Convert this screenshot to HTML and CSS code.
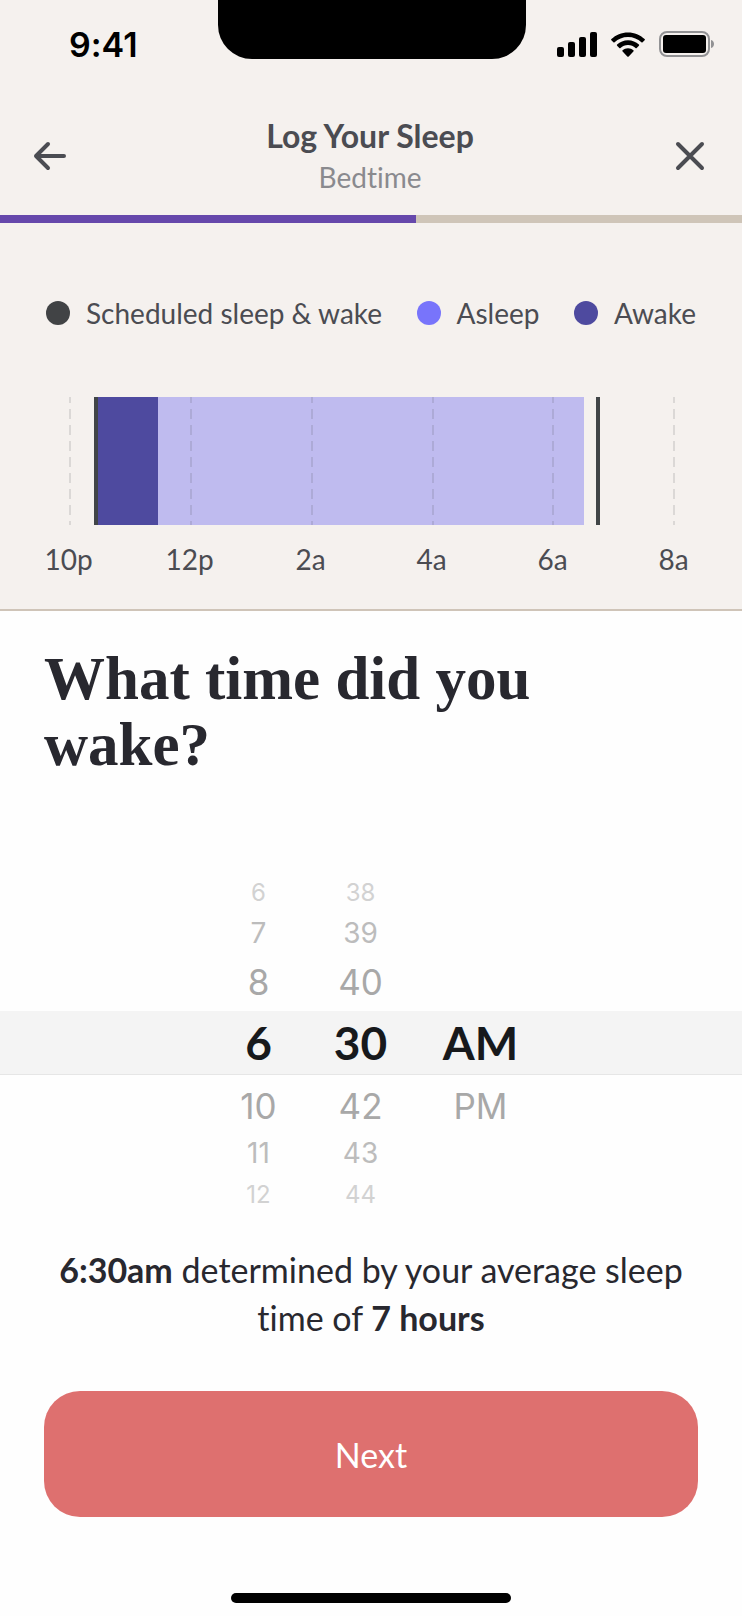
FILE: index.html
```html
<!DOCTYPE html>
<html lang="en">
<head>
    <meta charset="UTF-8">
    <meta name="viewport" content="width=device-width, initial-scale=1.0">
    <title>Log Your Sleep</title>
    <link rel="stylesheet" href="styles.css">
</head>
<body>
    <div class="screen">
        <div class="top">
            <!-- Status bar -->
            <div class="status-bar">
                <div class="clock">9:41</div>
                <div class="notch"></div>
                <div class="status-icons">
                    <svg width="40" height="26" viewBox="0 -1 40 26">
                        <rect x="0" y="15" width="7" height="10" rx="2"/>
                        <rect x="11" y="10" width="7" height="15" rx="2"/>
                        <rect x="22" y="5" width="7" height="20" rx="2"/>
                        <rect x="33" y="0" width="7" height="25" rx="2"/>
                    </svg>
                    <svg width="34" height="26" viewBox="0 -1 34 26">
                        <path d="M17 0.5C10.6 0.5 4.7 3 0.4 7.1q-.6.6 0 1.2L2.4 10.2q.6.5 1.2 0C7.1 6.9 11.8 4.9 17 4.9s9.9 2 13.4 5.3q.6.5 1.2 0l2-1.9q.6-.6 0-1.2C29.3 3 23.4.5 17 .5z"/>
                        <path d="M17 8.3c-4.2 0-8 1.6-10.9 4.3q-.6.6 0 1.2l2.2 2.2q.6.5 1.2 0c2-1.9 4.6-3 7.5-3s5.500 1.1 7.5 3q.6.5 1.2 0l2.2-2.2q.6-.6 0-1.2C25 9.9 21.2 8.3 17 8.3z"/>
                        <path d="M17 16.2c-2.1 0-4 .8-5.4 2q-.6.6 0 1.2l4.700 5q.7.7 1.4 0l4.700-5q.6-.6 0-1.2c-1.4-1.2-3.3-2-5.400-2z"/>
                    </svg>
                    <svg width="56" height="26" viewBox="0 0 56 26">
                        <rect x="1" y="1" width="49" height="24" rx="7" fill="none" stroke="#929294" stroke-width="2"/>
                        <rect x="4" y="4" width="43" height="18" rx="3"/>
                        <path d="M52 9c4 1 4 7 0 8z" fill="#929294"/>
                    </svg>
                </div>
            </div>
            <!-- Title with back and close -->
            <header class="header">
                <button class="icon-btn" aria-label="Back">
                    <svg width="36" height="36" viewBox="0 0 36 36">
                        <path d="M16 6L4 18L16 30M4 18H32"/>
                    </svg>
                </button>
                <div class="header-text">
                    <h1 class="title">Log Your Sleep</h1>
                    <div class="subtitle">Bedtime</div>
                </div>
                <button class="icon-btn" aria-label="Close">
                    <svg width="36" height="36" viewBox="0 0 36 36">
                        <path d="M6 6L30 30M30 6L6 30"/>
                    </svg>
                </button>
            </header>
            <div class="progress"><div class="progress-fill" style="width: 56%"></div></div>
            <!-- Sleep chart -->
            <ul class="legend">
                <li class="legend-item"><span class="dot dot-scheduled"></span>Scheduled sleep &amp; wake</li>
                <li class="legend-item"><span class="dot dot-asleep"></span>Asleep</li>
                <li class="legend-item"><span class="dot dot-awake"></span>Awake</li>
            </ul>
            <svg class="chart" viewBox="0 0 742 128">
                <rect class="bar-asleep" x="158" y="0" width="426" height="128"/>
                <path class="grid-lines" d="M70 0V128M191 0V128M312 0V128M433 0V128M553 0V128M674 0V128"/>
                <rect class="bar-awake" x="98" y="0" width="60" height="128"/>
                <rect class="bar-scheduled" x="94" y="0" width="4" height="128"/>
                <rect class="bar-scheduled" x="596" y="0" width="4" height="128"/>
            </svg>
            <div class="hours">
                <span>10p</span>
                <span>12p</span>
                <span>2a</span>
                <span>4a</span>
                <span>6a</span>
                <span>8a</span>
            </div>
        </div>

        <main class="content">
            <h2 class="question">What time did you wake?</h2>
            <!-- Time picker -->
            <div class="picker" role="group" aria-label="Wake time">
                <div class="picker-row far"><button>6</button><button>38</button></div>
                <div class="picker-row mid"><button>7</button><button>39</button></div>
                <div class="picker-row near"><button>8</button><button>40</button></div>
                <div class="picker-row selected"><button>6</button><button>30</button><button>AM</button></div>
                <div class="picker-row near"><button>10</button><button>42</button><button>PM</button></div>
                <div class="picker-row mid"><button>11</button><button>43</button></div>
                <div class="picker-row far"><button>12</button><button>44</button></div>
            </div>
            <p class="note"><b>6:30am</b> determined by your average sleep time of <b>7 hours</b></p>
            <button class="next-btn">Next</button>
        </main>
        <div class="home-bar"></div>
    </div>
</body>
</html>
```
FILE: styles.css
```css
* {
    box-sizing: border-box;
}
body {
    margin: 0;
    font-family: Lato, sans-serif;
    font-variant-ligatures: none;
    background: #fefefe;
    color: #28282f;
}
button {
    font-family: inherit;
    background: none;
    border: none;
    padding: 0;
    cursor: pointer;
}
.screen {
    display: flex;
    flex-direction: column;
    min-height: 100vh;
}
.top {
    background: #f5f1ee;
    border-bottom: 2px solid #cfc4b8;
    color: #4b4c52;
}
/* Status bar */
.status-bar {
    display: flex;
    justify-content: space-between;
    align-items: flex-start;
    height: 108px;
}
.clock {
    width: 218px;
    padding: 24px 0 0 69px;
    font-family: Inter, sans-serif;
    font-size: 34px;
    font-weight: 600;
    line-height: 42px;
    color: #000;
}
.notch {
    width: 308px;
    height: 59px;
    background: #000;
    border-radius: 0 0 34px 34px;
}
.status-icons {
    display: flex;
    justify-content: flex-end;
    gap: 14px;
    width: 216px;
    padding: 31px 27px 0 0;
}
/* Header */
.header {
    display: flex;
    justify-content: space-between;
    align-items: center;
    height: 107px;
    padding: 0 34px 11px 32px;
}
.header-text {
    text-align: center;
}
.icon-btn {
    display: flex;
}
.icon-btn svg {
    fill: none;
    stroke: #4b4c52;
    stroke-width: 4;
    stroke-linecap: round;
    stroke-linejoin: round;
}
.title {
    margin: 0;
    font-size: 32px;
    font-weight: 700;
    line-height: 42px;
}
.subtitle {
    font-size: 28px;
    line-height: 40px;
    color: #8a8a8e;
}
.progress {
    height: 8px;
    background: #cfc5b8;
}
.progress-fill {
    height: 100%;
    background: #6648ab;
}
/* Chart */
.legend {
    display: flex;
    justify-content: space-between;
    list-style: none;
    margin: 0;
    padding: 70px 46px 64px;
    font-size: 28px;
    line-height: 40px;
}
.legend-item {
    display: flex;
    align-items: center;
    gap: 16px;
}
.dot {
    width: 24px;
    height: 24px;
    border-radius: 50%;
}
.dot-scheduled {
    background: #414345;
}
.dot-asleep {
    background: #7874fb;
}
.dot-awake {
    background: #4e4a9f;
}
.chart {
    display: block;
    width: 100%;
}
.bar-asleep {
    fill: #bfbbef;
}
.bar-awake {
    fill: #4e4a9f;
}
.bar-scheduled {
    fill: #414547;
}
.grid-lines {
    stroke: #4b4c52;
    stroke-opacity: 0.15;
    stroke-width: 2;
    stroke-dasharray: 10 6;
    stroke-dashoffset: 4;
}
.hours {
    display: flex;
    padding: 14px 8px 30px;
    font-size: 28px;
    line-height: 40px;
}
.hours span {
    flex: 1;
    text-align: center;
}
/* Question and picker */
.content {
    flex: 1;
}
.question {
    margin: 0;
    padding: 35px 160px 91px 44px;
    font-family: "Liberation Serif", serif;
    font-size: 61px;
    font-weight: 700;
    line-height: 66px;
}
.picker {
    font-family: Inter, sans-serif;
}
.picker-row {
    display: grid;
    grid-template-columns: 102px 102px 138px;
    justify-content: center;
    align-items: center;
    padding-left: 15px;
}
.picker-row button {
    color: inherit;
    font-size: inherit;
    font-weight: inherit;
}
.picker-row.far {
    height: 46px;
    font-size: 24px;
    color: #d2d2d2;
}
.picker-row.mid {
    height: 36px;
    font-size: 28px;
    color: #bcbcbc;
}
.picker-row.near {
    height: 60px;
    padding-top: 2px;
    font-size: 35px;
    color: #a8a8a8;
}
.picker-row.selected {
    height: 64px;
    background: #f4f4f4;
    border-bottom: 1px solid #e6e6e6;
    font-family: Lato, sans-serif;
    font-size: 46px;
    font-weight: 700;
    color: #17191c;
}
.note {
    margin: 0;
    padding: 29px 44px 49px;
    font-size: 34px;
    line-height: 48px;
    text-align: center;
}
.next-btn {
    display: block;
    width: calc(100% - 88px);
    height: 126px;
    margin: 0 44px;
    background: #de706f;
    border-radius: 36px;
    font-size: 34px;
    color: #fff;
}
.home-bar {
    width: 280px;
    height: 10px;
    margin: 0 auto 13px;
    background: #000;
    border-radius: 5px;
}
```
